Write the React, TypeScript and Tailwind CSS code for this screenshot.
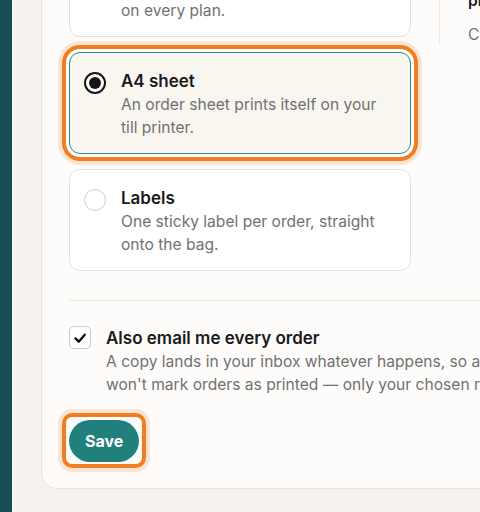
import { useState } from "react";

type Option = {
  id: string;
  title: string;
  body: string;
};

const options: Option[] = [
  { id: "slip", title: "Receipt slip", body: "One narrow slip per order, included on every plan." },
  { id: "a4", title: "A4 sheet", body: "An order sheet prints itself on your till printer." },
  { id: "labels", title: "Labels", body: "One sticky label per order, straight onto the bag." },
];

function Radio({ checked }: { checked: boolean }) {
  if (checked) {
    return (
      <span className="mt-[3px] flex h-[22px] w-[22px] shrink-0 items-center justify-center rounded-full border-2 border-[#161616] bg-white">
        <span className="h-[12px] w-[12px] rounded-full bg-[#161616]" />
      </span>
    );
  }
  return <span className="mt-[3px] h-[22px] w-[22px] shrink-0 rounded-full border-[1.5px] border-[#cfcdc9] bg-white" />;
}

export default function App() {
  const [format, setFormat] = useState("a4");
  const [email, setEmail] = useState(true);

  return (
    <div className="flex h-[512px] w-[480px] overflow-hidden bg-[#f6f3ee] font-['Inter',sans-serif] antialiased">
      <div className="w-3 shrink-0 bg-[#154f54]" />
      <main className="flex min-w-0 flex-1 flex-col justify-end pb-[23px] pl-[29px]">
        <section className="w-[640px] shrink-0 rounded-2xl border border-[#e8e4dd] bg-[#fdfcfa] pb-[26px] pl-[27px]">
          <div className="flex items-start">
            <div className="flex w-[342px] shrink-0 flex-col gap-[15px]">
              {options.map((o) => {
                const selected = format === o.id;
                return (
                  <button
                    key={o.id}
                    onClick={() => setFormat(o.id)}
                    className={
                      selected
                        ? "flex gap-[15px] rounded-[11px] border border-[#2b8a83] bg-[#f9f6f0] pb-[14px] pl-[14px] pr-4 pt-4 text-left shadow-[0_0_0_3px_#ffffff,0_0_0_7px_#ef7d22,0_0_0_11px_rgba(245,150,70,0.22)]"
                        : "flex gap-[15px] rounded-[11px] border border-[#e4e1db] bg-white pb-[14px] pl-[14px] pr-4 pt-4 text-left"
                    }
                  >
                    <Radio checked={selected} />
                    <span className="flex flex-col">
                      <span className="text-[17px] font-semibold leading-[25px] text-[#1a1a1a]">{o.title}</span>
                      <span className="text-[15.6px] leading-[22.5px] text-[#717171]">{o.body}</span>
                    </span>
                  </button>
                );
              })}
            </div>
            <aside className="ml-[28px] border-l border-[#ece9e3] pl-[28px]">
              <p className="mb-3 text-[13px] leading-5 text-[#8a8a8a]">Status</p>
              <p className="w-[150px] text-[15.6px] font-semibold leading-[22.5px] text-[#1a1a1a]">
                Connected receipt printer
              </p>
              <p className="mt-[12px] text-[15.6px] leading-[21px] text-[#717171]">Checked just now</p>
            </aside>
          </div>

          <hr className="mb-[25px] mt-[29px] border-[#ebe8e2]" />

          <label className="flex cursor-pointer gap-[15px]">
            <button
              onClick={() => setEmail(!email)}
              className="flex h-[23px] w-[22px] shrink-0 items-center justify-center rounded-[5px] border-[1.5px] border-[#cdcbc7] bg-white"
            >
              {email && (
                <svg viewBox="0 0 22 23" className="h-[23px] w-[22px]">
                  <path d="M6 12.5l3.6 3.6L16.2 8.4" fill="none" stroke="#111" strokeWidth="2.6" strokeLinecap="round" strokeLinejoin="round" />
                </svg>
              )}
            </button>
            <span className="flex flex-col">
              <span className="text-[17px] font-semibold leading-[25px] text-[#1a1a1a]">Also email me every order</span>
              <span className="whitespace-nowrap text-[15.6px] leading-[22.5px] text-[#717171]">
                A copy lands in your inbox whatever happens, so a jam never loses a sale. It
                <br />
                won't mark orders as printed — only your chosen route does.
              </span>
            </span>
          </label>

          <div className="relative mt-6 inline-flex">
            <span className="pointer-events-none absolute -bottom-[6px] -left-[7px] -right-[7px] -top-[7px] rounded-[10px] border-4 border-[#ef7d22] shadow-[0_0_0_4px_rgba(245,150,70,0.22)]" />
            <button className="relative h-[42px] rounded-full bg-[#21807b] px-4 text-[16px] font-bold text-white">
              Save
            </button>
          </div>
        </section>
      </main>
    </div>
  );
}
